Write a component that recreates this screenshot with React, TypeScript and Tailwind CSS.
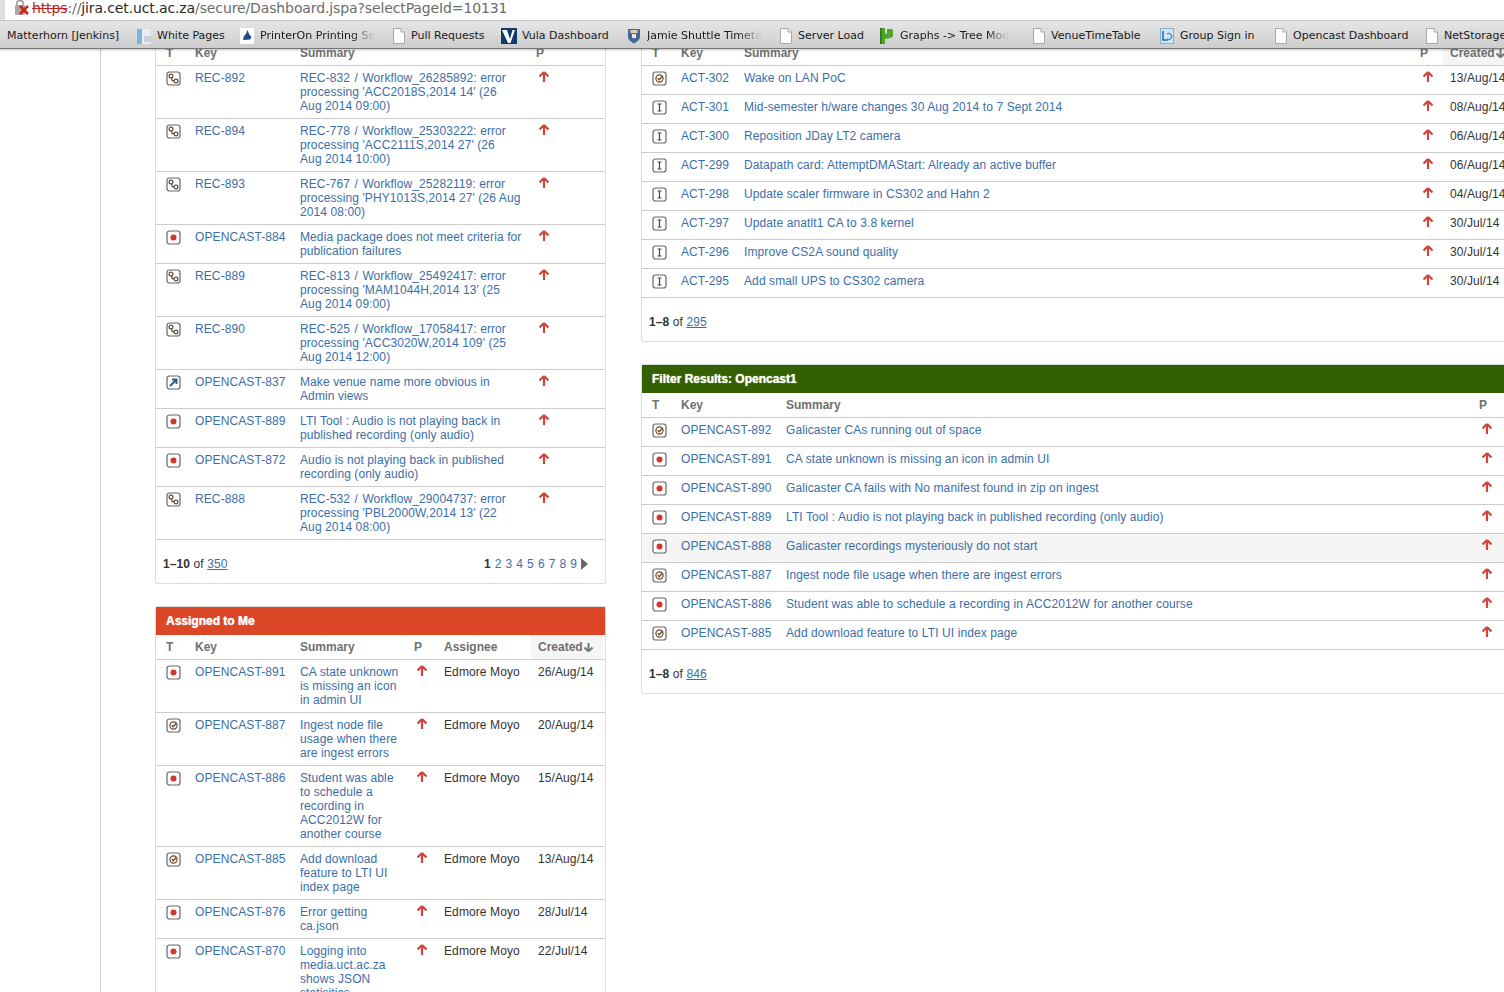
// JIRA 仪表盘截图：顶部是浏览器地址栏和书签栏，下面两列 gadget 表格。
import type { ReactNode } from "react";

type IssueType = "rec" | "bug" | "task" | "up" | "story";

const SANS = "font-['Liberation_Sans',Arial,sans-serif]";

function TypeIcon({ type }: { type: IssueType }) {
  return (
    <svg width="15" height="15" viewBox="0 0 15 15" className="block">
      <rect x="1" y="1" width="13" height="13" rx="2.5" fill="#fff" stroke="#666" strokeWidth="1.2" />
      {type === "bug" && <circle cx="7.5" cy="7.5" r="3" fill="#d5362b" />}
      {type === "rec" && (
        <g fill="none" stroke="#5f4a36" strokeWidth="1.2">
          <circle cx="5" cy="5" r="1.9" />
          <circle cx="10" cy="10" r="1.9" />
          <path d="M5.6 7 L6.2 9.6 H8" />
        </g>
      )}
      {type === "task" && (
        <g fill="none" stroke="#6f4a2a" strokeWidth="1.2">
          <circle cx="7.5" cy="7.5" r="3.6" />
          <path d="M5.8 7.3 L7.2 8.8 L10.6 5" strokeWidth="1.4" />
        </g>
      )}
      {type === "up" && (
        <path d="M4 11 L9.5 5.5 M6 4.5 H10.5 V9" fill="none" stroke="#3c5a82" strokeWidth="2" />
      )}
      {type === "story" && (
        <path d="M5.5 4 H9.5 M7.5 4 V11 M5.5 11 H9.5" fill="none" stroke="#444" strokeWidth="1.2" />
      )}
    </svg>
  );
}

function UpArrow() {
  return (
    <svg width="10" height="11" viewBox="0 0 10 11" className="block">
      <path d="M5 1 L9.5 5.5 M5 1 L0.5 5.5 M5 1 V11" fill="none" stroke="#d0443c" strokeWidth="2.2" />
    </svg>
  );
}

function DownArrow() {
  return (
    <svg width="9" height="9" viewBox="0 0 9 9" className="ml-[1px] inline-block align-[-1px]">
      <path d="M4.5 8.5 L8.5 4.5 M4.5 8.5 L0.5 4.5 M4.5 8.5 V0" fill="none" stroke="#777" strokeWidth="2" />
    </svg>
  );
}

function IssueLink({ children }: { children: ReactNode }) {
  return <span className="text-[#3b6ea8]">{children}</span>;
}

function PanelHeading({ title, color }: { title: string; color: string }) {
  return (
    <div className={`h-[28px] pl-[10px] text-[12px] leading-[28px] font-bold text-white [text-shadow:0_0_1px_#fff] ${color}`}>
      {title}
    </div>
  );
}

function HeaderRow({ grid, cells, sorted }: { grid: string; cells: string[]; sorted?: boolean }) {
  return (
    <div className={`grid h-[25px] border-b border-[#ccc] text-[12px] leading-[24px] font-bold text-[#707070] ${grid}`}>
      {cells.map((c, i) => (
        <div key={c} className={i === 0 ? "pl-[10px]" : sorted && i === cells.length - 1 ? "bg-[#f5f5f5] pl-[7px] whitespace-nowrap" : ""}>
          {c}
          {sorted && i === cells.length - 1 && <DownArrow />}
        </div>
      ))}
    </div>
  );
}

function Footer({ range, total, pager }: { range: string; total: string; pager?: boolean }) {
  return (
    <div className="flex h-[43px] items-start justify-between pt-[17px] pr-[17px] pl-[7px] text-[12px] leading-[14px] tracking-[0.1px] text-[#333]">
      <span>
        <b>{range}</b> of <span className="text-[#3b6ea8] underline">{total}</span>
      </span>
      {pager && (
        <span className="flex h-[14px] items-center gap-[4px]">
          <b>1</b>
          {[2, 3, 4, 5, 6, 7, 8, 9].map((n) => (
            <span key={n} className="text-[#3b6ea8]">{n}</span>
          ))}
          <svg width="7" height="12" viewBox="0 0 7 12"><path d="M0 0 L7 6 L0 12 Z" fill="#666" /></svg>
        </span>
      )}
    </div>
  );
}

function RecSummary({ rec, lines }: { rec: string; lines: [string, string, string] }) {
  return (
    <>
      {rec} <span className="mx-[1px]">/</span> {lines[0]}
      <br />
      {lines[1]}
      <br />
      {lines[2]}
    </>
  );
}

// 左上：录制工作流错误
const RECORDINGS: [IssueType, string, ReactNode][] = [
  ["rec", "REC-892", <RecSummary rec="REC-832" lines={["Workflow_26285892: error", "processing 'ACC2018S,2014 14' (26", "Aug 2014 09:00)"]} />],
  ["rec", "REC-894", <RecSummary rec="REC-778" lines={["Workflow_25303222: error", "processing 'ACC2111S,2014 27' (26", "Aug 2014 10:00)"]} />],
  ["rec", "REC-893", <RecSummary rec="REC-767" lines={["Workflow_25282119: error", "processing 'PHY1013S,2014 27' (26 Aug", "2014 08:00)"]} />],
  ["bug", "OPENCAST-884", "Media package does not meet criteria for publication failures"],
  ["rec", "REC-889", <RecSummary rec="REC-813" lines={["Workflow_25492417: error", "processing 'MAM1044H,2014 13' (25", "Aug 2014 09:00)"]} />],
  ["rec", "REC-890", <RecSummary rec="REC-525" lines={["Workflow_17058417: error", "processing 'ACC3020W,2014 109' (25", "Aug 2014 12:00)"]} />],
  ["up", "OPENCAST-837", <>Make venue name more obvious in<br />Admin views</>],
  ["bug", "OPENCAST-889", "LTI Tool : Audio is not playing back in published recording (only audio)"],
  ["bug", "OPENCAST-872", "Audio is not playing back in published recording (only audio)"],
  ["rec", "REC-888", <RecSummary rec="REC-532" lines={["Workflow_29004737: error", "processing 'PBL2000W,2014 13' (22", "Aug 2014 08:00)"]} />],
];

const ASSIGNED: [IssueType, string, string, string][] = [
  ["bug", "OPENCAST-891", "CA state unknown is missing an icon in admin UI", "26/Aug/14"],
  ["task", "OPENCAST-887", "Ingest node file usage when there are ingest errors", "20/Aug/14"],
  ["bug", "OPENCAST-886", "Student was able to schedule a recording in ACC2012W for another course", "15/Aug/14"],
  ["task", "OPENCAST-885", "Add download feature to LTI UI index page", "13/Aug/14"],
  ["bug", "OPENCAST-876", "Error getting ca.json", "28/Jul/14"],
  ["bug", "OPENCAST-870", "Logging into media.uct.ac.za shows JSON statisitics", "22/Jul/14"],
];

const ACT: [IssueType, string, string, string][] = [
  ["task", "ACT-302", "Wake on LAN PoC", "13/Aug/14"],
  ["story", "ACT-301", "Mid-semester h/ware changes 30 Aug 2014 to 7 Sept 2014", "08/Aug/14"],
  ["story", "ACT-300", "Reposition JDay LT2 camera", "06/Aug/14"],
  ["story", "ACT-299", "Datapath card: AttemptDMAStart: Already an active buffer", "06/Aug/14"],
  ["story", "ACT-298", "Update scaler firmware in CS302 and Hahn 2", "04/Aug/14"],
  ["story", "ACT-297", "Update anatlt1 CA to 3.8 kernel", "30/Jul/14"],
  ["story", "ACT-296", "Improve CS2A sound quality", "30/Jul/14"],
  ["story", "ACT-295", "Add small UPS to CS302 camera", "30/Jul/14"],
];

const OPENCAST1: [IssueType, string, string][] = [
  ["task", "OPENCAST-892", "Galicaster CAs running out of space"],
  ["bug", "OPENCAST-891", "CA state unknown is missing an icon in admin UI"],
  ["bug", "OPENCAST-890", "Galicaster CA fails with No manifest found in zip on ingest"],
  ["bug", "OPENCAST-889", "LTI Tool : Audio is not playing back in published recording (only audio)"],
  ["bug", "OPENCAST-888", "Galicaster recordings mysteriously do not start"],
  ["task", "OPENCAST-887", "Ingest node file usage when there are ingest errors"],
  ["bug", "OPENCAST-886", "Student was able to schedule a recording in ACC2012W for another course"],
  ["task", "OPENCAST-885", "Add download feature to LTI UI index page"],
];

const BOOKMARKS: { label: string; width: string; icon?: ReactNode; fade?: boolean }[] = [
  { label: "Matterhorn [Jenkins]", width: "w-[137px] pl-[7px]" },
  { label: "White Pages", width: "w-[103px]", icon: <PagesIcon /> },
  { label: "PrinterOn Printing Se", width: "w-[153px]", icon: <PrinterIcon />, fade: true },
  { label: "Pull Requests", width: "w-[108px]", icon: <PageIcon /> },
  { label: "Vula Dashboard", width: "w-[126px]", icon: <VulaIcon /> },
  { label: "Jamie Shuttle Timeta", width: "w-[153px]", icon: <ShieldIcon />, fade: true },
  { label: "Server Load", width: "w-[99px]", icon: <PageIcon /> },
  { label: "Graphs -> Tree Mod", width: "w-[154px]", icon: <CactusIcon />, fade: true },
  { label: "VenueTimeTable", width: "w-[127px]", icon: <PageIcon /> },
  { label: "Group Sign in", width: "w-[115px]", icon: <GroupIcon /> },
  { label: "Opencast Dashboard", width: "w-[151px]", icon: <PageIcon /> },
  { label: "NetStorage", width: "w-[90px]", icon: <PageIcon /> },
];

function PageIcon() {
  return (
    <svg width="12" height="16" viewBox="0 0 12 16" className="block">
      <path d="M0.5 0.5 H8 L11.5 4 V15.5 H0.5 Z" fill="#fdfdfd" stroke="#a8a8a8" />
      <path d="M8 0.5 V4 H11.5" fill="#eee" stroke="#a8a8a8" />
    </svg>
  );
}

function PagesIcon() {
  return (
    <svg width="14" height="16" viewBox="0 0 14 16" className="block">
      <rect x="0" y="1" width="5" height="15" fill="#7fb2dc" />
      <rect x="5" y="1" width="9" height="15" fill="#e9eef3" />
      <rect x="7" y="8" width="7" height="6" fill="#c9d2da" />
    </svg>
  );
}

function PrinterIcon() {
  return (
    <svg width="14" height="16" viewBox="0 0 14 16" className="block">
      <rect width="14" height="16" fill="#fff" />
      <path d="M7.5 2 L9 6 L11.5 9 L10 11.5 L3 12 L4 8 L6 6 Z" fill="#1c4a80" />
    </svg>
  );
}

function VulaIcon() {
  return (
    <svg width="16" height="16" viewBox="0 0 16 16" className="-mr-[1px] block">
      <rect width="16" height="16" fill="#0f3a6b" />
      <path d="M1 2 H6 L9 11 L11.5 2 H14 L9.5 15 H7 Z" fill="#fff" />
    </svg>
  );
}

function ShieldIcon() {
  return (
    <svg width="14" height="16" viewBox="0 0 14 16" className="block">
      <path d="M1 1 H13 V9 C13 12 9.5 14 7 15.5 C4.5 14 1 12 1 9 Z" fill="#47679a" />
      <rect x="3.5" y="2" width="7" height="3" fill="#d9d2b8" />
      <rect x="5" y="6" width="4" height="4" fill="#e8e8e8" />
    </svg>
  );
}

function CactusIcon() {
  return (
    <svg width="15" height="18" viewBox="0 0 15 18" className="block">
      <path d="M1 1 H6 V4 Q6 7 8 7 V2 H12 Q14 2 14 5 V9 Q14 11 6 12 V17 H1 Z" fill="#4fa52c" />
      <path d="M1 1 H3 V17 H1 Z" fill="#2f7d1c" />
    </svg>
  );
}

function GroupIcon() {
  return (
    <svg width="14" height="16" viewBox="0 0 14 16" className="block">
      <rect x="0.5" y="0.5" width="13" height="15" fill="#cfe6f5" stroke="#7fb2dc" />
      <path d="M3 3 V12 H8" fill="none" stroke="#2b6aa8" strokeWidth="1.5" />
      <path d="M7 6 A3 3 0 1 1 7 11" fill="none" stroke="#3f8ac4" strokeWidth="1.2" />
    </svg>
  );
}

function Chrome() {
  return (
    <div className="relative z-10 shrink-0 bg-white shadow-[0_1px_2px_rgba(0,0,0,0.25)]">
      <div className="flex h-[20px] bg-white">
        <div className="h-[20px] w-[5px] shrink-0 bg-[#dedede]" />
        <div className="flex flex-1 overflow-hidden">
          <div className="relative h-[20px] w-[27px] shrink-0">
            <svg width="22" height="17" viewBox="0 0 22 17" className="absolute top-0 left-[7px]">
              <rect x="3" y="5" width="10" height="10" rx="1" fill="#a9a9a9" />
              <path d="M5 6 V2 Q8 -1 11 2 V6" fill="none" stroke="#999" strokeWidth="1.5" />
              <path d="M8 6 L16 14 M16 6 L8 14" stroke="#cc2211" strokeWidth="2.5" />
            </svg>
          </div>
          <div className="-mt-[3px] font-['DejaVu_Sans',sans-serif] text-[14px] leading-[22px] tracking-[-0.12px] whitespace-nowrap text-[#6b6b6b]">
            <span className="text-[#b3261e] line-through">https</span>://<span className="text-[#2a2a2a]">jira.cet.uct.ac.za</span>/secure/Dashboard.jspa?selectPageId=10131
          </div>
        </div>
      </div>
      <div className="flex h-[29px] items-center border-y border-t-[#c4c4c4] border-b-[#777] bg-gradient-to-b from-[#e6e6e6] to-[#cdcdcd] pt-[2px] font-['DejaVu_Sans',sans-serif] text-[11px] leading-[14px] text-[#1a1a1a]">
        {BOOKMARKS.map((b) => (
          <div key={b.label} className={`flex shrink-0 items-center gap-[6px] ${b.width}`}>
            {b.icon}
            <span className={b.fade ? "whitespace-nowrap [mask-image:linear-gradient(to_right,black_80%,transparent)]" : "whitespace-nowrap"}>
              {b.label}
            </span>
          </div>
        ))}
      </div>
    </div>
  );
}

function RecordingsPanel() {
  const grid = "grid-cols-[39px_105px_236px_1fr]";
  return (
    <section className="rounded-b-[3px] border-x border-b border-[#ddd]">
      <HeaderRow grid={grid} cells={["T", "Key", "Summary", "P"]} />
      {RECORDINGS.map(([type, key, summary]) => (
        <div key={key} className={`grid border-b border-[#ccc] py-[5px] text-[12px] leading-[14px] tracking-[0.1px] ${grid}`}>
          <div className="pl-[10px]"><TypeIcon type={type} /></div>
          <IssueLink>{key}</IssueLink>
          <div className="pr-[6px] whitespace-normal"><IssueLink>{summary}</IssueLink></div>
          <div className="pl-[3px]"><UpArrow /></div>
        </div>
      ))}
      <Footer range="1–10" total="350" pager />
    </section>
  );
}

function AssignedPanel() {
  const grid = "grid-cols-[39px_105px_114px_30px_87px_72px]";
  return (
    <section className="rounded-[3px] border border-[#ddd]">
      <PanelHeading title="Assigned to Me" color="bg-[#da4626]" />
      <HeaderRow grid={grid} cells={["T", "Key", "Summary", "P", "Assignee", "Created"]} sorted />
      {ASSIGNED.map(([type, key, summary, created]) => (
        <div key={key} className={`grid border-b border-[#ccc] py-[5px] text-[12px] leading-[14px] tracking-[0.1px] text-[#333] ${grid}`}>
          <div className="pl-[10px]"><TypeIcon type={type} /></div>
          <IssueLink>{key}</IssueLink>
          <div className="pr-[10px]"><IssueLink>{summary}</IssueLink></div>
          <div className="pl-[3px]"><UpArrow /></div>
          <div>Edmore Moyo</div>
          <div className="pl-[7px]">{created}</div>
        </div>
      ))}
    </section>
  );
}

function ActPanel() {
  const grid = "grid-cols-[39px_63px_676px_23px_80px]";
  return (
    <section className="rounded-b-[3px] border-x border-b border-[#ddd]">
      <HeaderRow grid={grid} cells={["T", "Key", "Summary", "P", "Created"]} sorted />
      {ACT.map(([type, key, summary, created]) => (
        <div key={key} className={`grid border-b border-[#ccc] pt-[5px] pb-[8px] text-[12px] leading-[14px] tracking-[0.1px] text-[#333] ${grid}`}>
          <div className="pl-[10px]"><TypeIcon type={type} /></div>
          <IssueLink>{key}</IssueLink>
          <IssueLink>{summary}</IssueLink>
          <div className="pl-[3px]"><UpArrow /></div>
          <div className="pl-[7px] whitespace-nowrap">{created}</div>
        </div>
      ))}
      <Footer range="1–8" total="295" />
    </section>
  );
}

function OpencastPanel() {
  const grid = "grid-cols-[39px_105px_693px_1fr]";
  return (
    <section className="rounded-[3px] border border-[#ddd]">
      <PanelHeading title="Filter Results: Opencast1" color="bg-[#336000]" />
      <HeaderRow grid={grid} cells={["T", "Key", "Summary", "P"]} />
      {OPENCAST1.map(([type, key, summary]) => (
        <div
          key={key}
          className={`grid border-b border-[#ccc] pt-[5px] pb-[8px] text-[12px] leading-[14px] tracking-[0.1px] ${grid} ${key === "OPENCAST-888" ? "bg-[#f5f5f5]" : ""}`}
        >
          <div className="pl-[10px]"><TypeIcon type={type} /></div>
          <IssueLink>{key}</IssueLink>
          <IssueLink>{summary}</IssueLink>
          <div className="pl-[3px]"><UpArrow /></div>
        </div>
      ))}
      <Footer range="1–8" total="846" />
    </section>
  );
}

export default function App() {
  return (
    <div className={`flex h-screen flex-col overflow-hidden bg-white ${SANS}`}>
      <Chrome />
      <div className="flex min-h-0 flex-1">
        <div className="w-[101px] shrink-0 border-r border-[#ccc]" />
        {/* 页面已经往下滚了一点，表头有一截压在书签栏下面 */}
        <main className="-mt-[8px] flex items-start gap-[35px] pl-[54px]">
          <div className="flex w-[451px] shrink-0 flex-col gap-[22px]">
            <RecordingsPanel />
            <AssignedPanel />
          </div>
          <div className="flex w-[900px] shrink-0 flex-col gap-[22px]">
            <ActPanel />
            <OpencastPanel />
          </div>
        </main>
      </div>
    </div>
  );
}
